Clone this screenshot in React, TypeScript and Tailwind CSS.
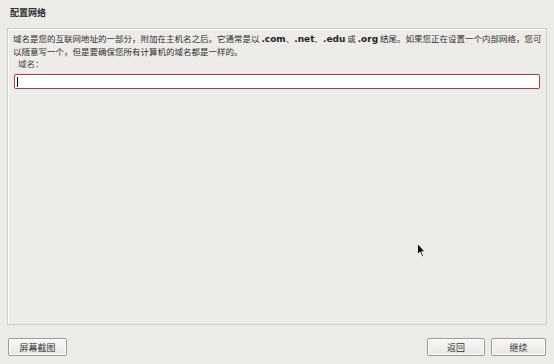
const cjk = "font-['Noto_Sans_CJK_SC','DejaVu_Sans',sans-serif]";

function Code({ children }: { children: string }) {
  return <span className="font-['DejaVu_Sans',sans-serif] font-bold text-[9px] text-[#222]">{children}</span>;
}

function Btn({ label, className }: { label: string; className?: string }) {
  return (
    <button
      className={`h-[18px] border border-[#9c9a95] rounded-[2px] bg-gradient-to-b from-[#f8f7f5] to-[#e9e7e3] shadow-[inset_0_0_0_1px_#ffffff] text-[9px] leading-none text-[#333] ${className ?? ""}`}
    >
      {label}
    </button>
  );
}

export default function App() {
  return (
    <div className={`relative w-[554px] h-[364px] bg-[#edebe8] ${cjk} text-[#2e2e2e] overflow-hidden`}>
      <div className="px-[10px] pt-[7px] h-[28px] text-[9px] font-bold leading-[12px]">配置网络</div>

      <div className="mx-[7px] w-[540px] h-[297px] border border-[#cfcdc9] bg-[#eeece9] shadow-[inset_1px_1px_0_#ffffff] px-[5px] pt-[3px]">
        <p className="text-[8.5px] leading-[12px] whitespace-nowrap">
          域名是您的互联网地址的一部分，附加在主机名之后。它通常是以 <Code>.com</Code>、<Code>.net</Code>、<Code>.edu</Code> 或 <Code>.org</Code> 结尾。如果您正在设置一个内部网络，您可
          <br />
          以随意写一个，但是要确保您所有计算机的域名都是一样的。
        </p>
        <div className="pl-[5px] text-[8.5px] leading-[12px] text-[#444]">域名：</div>
        <div className="mt-[4px] h-[17px] border border-[#f7dde2] rounded-[2px] p-0">
          <div className="h-full border border-[#8a4a58] rounded-[2px] bg-white flex items-center pl-[2px]">
            <div className="w-px h-[10px] bg-black" />
          </div>
        </div>
      </div>

      <div className="flex px-[8px] mt-[13px]">
        <Btn label="屏幕截图" className="w-[59px]" />
        <div className="flex-1" />
        <Btn label="返回" className="w-[58px]" />
        <Btn label="继续" className="w-[55px] ml-[6px]" />
      </div>

      <svg className="absolute left-[417px] top-[243px]" width="10" height="15" viewBox="0 0 10 15">
        <path d="M0.5 0.5 L0.5 11.5 L3 9 L5 13.5 L6.5 13 L4.7 8.7 L8 8.7 Z" fill="#111" stroke="#fff" strokeWidth="0.8" />
      </svg>
    </div>
  );
}
